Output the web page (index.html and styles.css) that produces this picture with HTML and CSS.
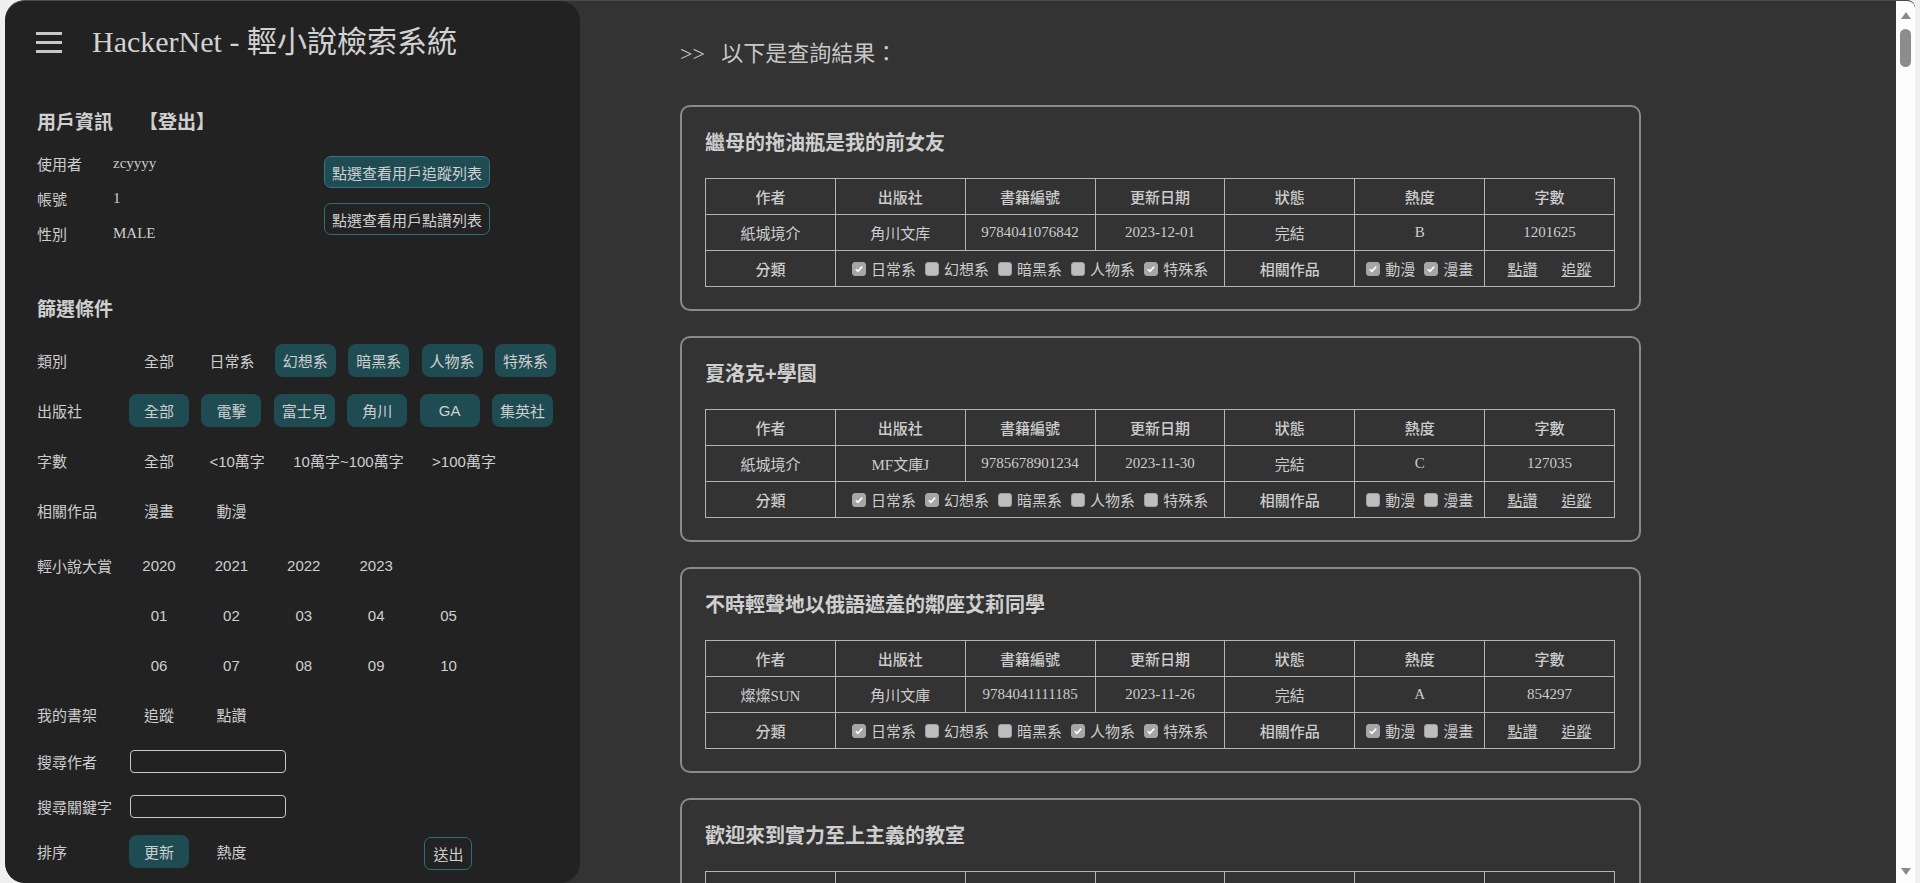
FILE: index.html
```html
<!DOCTYPE html>
<html lang="zh-Hant">
<head>
<meta charset="utf-8">
<title>HackerNet - 輕小說檢索系統</title>
<link rel="stylesheet" href="styles.css">
</head>
<body>
<div class="page">
  <aside class="sidebar">
    <div class="brand">
      <svg class="burger" width="26" height="21" viewBox="0 0 26 21"><rect x="0" y="0" width="26" height="3" fill="#c8c8c8"/><rect x="0" y="9" width="26" height="3" fill="#c8c8c8"/><rect x="0" y="18" width="26" height="3" fill="#c8c8c8"/></svg>
      <h1 class="brand-title">HackerNet - 輕小說檢索系統</h1>
    </div>

    <h2 class="sec-title">用戶資訊<span class="logout">【登出】</span></h2>
    <div class="user-body">
      <div class="info">
        <div class="info-row"><span class="info-label">使用者</span><span class="info-val">zcyyyy</span></div>
        <div class="info-row"><span class="info-label">帳號</span><span class="info-val">1</span></div>
        <div class="info-row"><span class="info-label">性別</span><span class="info-val">MALE</span></div>
      </div>
      <div class="user-btns">
        <button class="btn btn-fill">點選查看用戶追蹤列表</button>
        <button class="btn">點選查看用戶點讚列表</button>
      </div>
    </div>

    <h2 class="sec-title filter-title">篩選條件</h2>
    <div class="rows">
      <div class="row">
        <span class="row-label">類別</span>
        <div class="opts"><button class="opt">全部</button><button class="opt">日常系</button><button class="opt on">幻想系</button><button class="opt on">暗黑系</button><button class="opt on">人物系</button><button class="opt on">特殊系</button></div>
      </div>
      <div class="row">
        <span class="row-label">出版社</span>
        <div class="opts"><button class="opt on">全部</button><button class="opt on">電擊</button><button class="opt on">富士見</button><button class="opt on">角川</button><button class="opt on">GA</button><button class="opt on">集英社</button></div>
      </div>
      <div class="row">
        <span class="row-label">字數</span>
        <div class="opts"><button class="opt">全部</button><button class="opt">&lt;10萬字</button><button class="opt">10萬字~100萬字</button><button class="opt">&gt;100萬字</button></div>
      </div>
      <div class="row">
        <span class="row-label">相關作品</span>
        <div class="opts"><button class="opt">漫畫</button><button class="opt">動漫</button></div>
      </div>
      <div class="row award">
        <span class="row-label">輕小說大賞</span>
        <div class="opts"><button class="opt">2020</button><button class="opt">2021</button><button class="opt">2022</button><button class="opt">2023</button></div>
      </div>
      <div class="row">
        <span class="row-label"></span>
        <div class="opts"><button class="opt">01</button><button class="opt">02</button><button class="opt">03</button><button class="opt">04</button><button class="opt">05</button></div>
      </div>
      <div class="row">
        <span class="row-label"></span>
        <div class="opts"><button class="opt">06</button><button class="opt">07</button><button class="opt">08</button><button class="opt">09</button><button class="opt">10</button></div>
      </div>
      <div class="row shelf">
        <span class="row-label">我的書架</span>
        <div class="opts"><button class="opt">追蹤</button><button class="opt">點讚</button></div>
      </div>
      <div class="row search">
        <span class="row-label">搜尋作者</span>
        <input class="field" type="text">
      </div>
      <div class="row search">
        <span class="row-label">搜尋關鍵字</span>
        <input class="field" type="text">
      </div>
      <div class="row search">
        <span class="row-label">排序</span>
        <div class="opts"><button class="opt on">更新</button><button class="opt">熱度</button></div>
        <button class="btn submit">送出</button>
      </div>
    </div>
  </aside>

  <main class="main">
    <h2 class="result-head">&gt;&gt;&nbsp;&nbsp; 以下是查詢結果：</h2>

    <section class="card">
      <h3 class="card-title">繼母的拖油瓶是我的前女友</h3>
      <table class="book">
        <tr><th>作者</th><th>出版社</th><th>書籍編號</th><th>更新日期</th><th>狀態</th><th>熱度</th><th>字數</th></tr>
        <tr><td>紙城境介</td><td>角川文库</td><td>9784041076842</td><td>2023-12-01</td><td>完結</td><td>B</td><td>1201625</td></tr>
        <tr><th>分類</th>
          <td colspan="3"><span class="cb"><span class="box on"><svg viewBox="0 0 13 13"><path d="M3 6.8 5.3 9.1 10 3.9"/></svg></span>日常系</span><span class="cb"><span class="box"></span>幻想系</span><span class="cb"><span class="box"></span>暗黑系</span><span class="cb"><span class="box"></span>人物系</span><span class="cb"><span class="box on"><svg viewBox="0 0 13 13"><path d="M3 6.8 5.3 9.1 10 3.9"/></svg></span>特殊系</span></td>
          <th>相關作品</th>
          <td><span class="cb"><span class="box on"><svg viewBox="0 0 13 13"><path d="M3 6.8 5.3 9.1 10 3.9"/></svg></span>動漫</span><span class="cb"><span class="box on"><svg viewBox="0 0 13 13"><path d="M3 6.8 5.3 9.1 10 3.9"/></svg></span>漫畫</span></td>
          <td><a class="act" href="#">點讚</a><a class="act" href="#">追蹤</a></td></tr>
      </table>
    </section>

    <section class="card">
      <h3 class="card-title">夏洛克+學園</h3>
      <table class="book">
        <tr><th>作者</th><th>出版社</th><th>書籍編號</th><th>更新日期</th><th>狀態</th><th>熱度</th><th>字數</th></tr>
        <tr><td>紙城境介</td><td>MF文庫J</td><td>9785678901234</td><td>2023-11-30</td><td>完結</td><td>C</td><td>127035</td></tr>
        <tr><th>分類</th>
          <td colspan="3"><span class="cb"><span class="box on"><svg viewBox="0 0 13 13"><path d="M3 6.8 5.3 9.1 10 3.9"/></svg></span>日常系</span><span class="cb"><span class="box on"><svg viewBox="0 0 13 13"><path d="M3 6.8 5.3 9.1 10 3.9"/></svg></span>幻想系</span><span class="cb"><span class="box"></span>暗黑系</span><span class="cb"><span class="box"></span>人物系</span><span class="cb"><span class="box"></span>特殊系</span></td>
          <th>相關作品</th>
          <td><span class="cb"><span class="box"></span>動漫</span><span class="cb"><span class="box"></span>漫畫</span></td>
          <td><a class="act" href="#">點讚</a><a class="act" href="#">追蹤</a></td></tr>
      </table>
    </section>

    <section class="card">
      <h3 class="card-title">不時輕聲地以俄語遮羞的鄰座艾莉同學</h3>
      <table class="book">
        <tr><th>作者</th><th>出版社</th><th>書籍編號</th><th>更新日期</th><th>狀態</th><th>熱度</th><th>字數</th></tr>
        <tr><td>燦燦SUN</td><td>角川文庫</td><td>9784041111185</td><td>2023-11-26</td><td>完結</td><td>A</td><td>854297</td></tr>
        <tr><th>分類</th>
          <td colspan="3"><span class="cb"><span class="box on"><svg viewBox="0 0 13 13"><path d="M3 6.8 5.3 9.1 10 3.9"/></svg></span>日常系</span><span class="cb"><span class="box"></span>幻想系</span><span class="cb"><span class="box"></span>暗黑系</span><span class="cb"><span class="box on"><svg viewBox="0 0 13 13"><path d="M3 6.8 5.3 9.1 10 3.9"/></svg></span>人物系</span><span class="cb"><span class="box on"><svg viewBox="0 0 13 13"><path d="M3 6.8 5.3 9.1 10 3.9"/></svg></span>特殊系</span></td>
          <th>相關作品</th>
          <td><span class="cb"><span class="box on"><svg viewBox="0 0 13 13"><path d="M3 6.8 5.3 9.1 10 3.9"/></svg></span>動漫</span><span class="cb"><span class="box"></span>漫畫</span></td>
          <td><a class="act" href="#">點讚</a><a class="act" href="#">追蹤</a></td></tr>
      </table>
    </section>

    <section class="card">
      <h3 class="card-title">歡迎來到實力至上主義的教室</h3>
      <table class="book">
        <tr><th>作者</th><th>出版社</th><th>書籍編號</th><th>更新日期</th><th>狀態</th><th>熱度</th><th>字數</th></tr>
        <tr><td>衣笠彰梧</td><td>MF文庫J</td><td>9784040000000</td><td>2023-11-25</td><td>連載</td><td>A</td><td>1500000</td></tr>
      </table>
    </section>
  </main>

  <div class="scrollbar">
    <svg class="sb-arrow up" width="10" height="7" viewBox="0 0 10 7"><path d="M5 0 10 7 0 7Z" fill="#8a8a8a"/></svg>
    <div class="sb-thumb"></div>
    <div class="sb-track"></div>
    <svg class="sb-arrow down" width="10" height="7" viewBox="0 0 10 7"><path d="M0 0 10 0 5 7Z" fill="#8a8a8a"/></svg>
  </div>
</div>
</body>
</html>
```

FILE: styles.css
```css
* { box-sizing: border-box; }

html, body {
  margin: 0;
  height: 883px;
  overflow: hidden;
}

body {
  background: #efefef;
  padding: 0 5px;
  font-family: "Liberation Serif", "Noto Sans CJK TC", serif;
  color: #cdcdcd;
}

.page {
  display: flex;
  height: 883px;
  background: #333333;
  border-top: 1px solid #4a4a4a;
  border-radius: 20px 8px 0 20px;
  overflow: hidden;
}

/* ---------- sidebar ---------- */
.sidebar {
  width: 575px;
  flex-shrink: 0;
  background: #222222;
  border-radius: 20px;
  padding: 20px 0 0 32px;
}

.brand {
  display: flex;
  align-items: center;
  height: 42px;
}

.burger {
  margin-left: -1px;
  margin-right: 30px;
  flex-shrink: 0;
}

.brand-title {
  margin: 0;
  font-size: 30px;
  font-weight: normal;
  line-height: 42px;
  color: #d2d2d2;
  white-space: nowrap;
}

.sec-title {
  margin: 46px 0 0;
  font-family: "Noto Sans CJK TC", sans-serif;
  font-size: 19px;
  font-weight: bold;
  line-height: 24px;
  color: #cfcfcf;
}

.logout {
  margin-left: 26px;
}

.user-body {
  display: flex;
  margin-top: 13px;
}

.info {
  width: 287px;
}

.info-row {
  display: flex;
  align-items: center;
  height: 35px;
  font-size: 15px;
}

.info-label {
  width: 76px;
  flex-shrink: 0;
}

.user-btns {
  display: flex;
  flex-direction: column;
  align-items: flex-start;
  gap: 15px;
  padding-top: 10px;
}

.btn {
  height: 32px;
  padding: 0 7px;
  font-family: "Liberation Sans", "Noto Sans CJK TC", sans-serif;
  font-size: 15px;
  color: #cfcfcf;
  background: transparent;
  border: 1px solid #2c6f7a;
  border-radius: 7px;
}

.btn-fill {
  background: #1f4c53;
  border-color: #2f7782;
}

.filter-title {
  margin-top: 45px;
}

.rows {
  margin-top: 15px;
}

.row {
  display: flex;
  align-items: center;
  height: 50px;
  font-size: 15px;
}

.row.award { margin-top: 5px; }
.row.shelf { height: 49px; }
.row.search { height: 45px; }

.row-label {
  width: 92px;
  flex-shrink: 0;
}

.opts {
  display: flex;
  gap: 12.4px;
}

.opt {
  min-width: 60px;
  height: 33px;
  padding: 0 8px;
  border: none;
  border-radius: 8px;
  background: transparent;
  color: #cfcfcf;
  font-family: "Liberation Sans", "Noto Sans CJK TC", sans-serif;
  font-size: 15px;
  white-space: nowrap;
}

.opt.on {
  background: #1f4c53;
}

.field {
  width: 156px;
  height: 23px;
  margin-left: 1px;
  border: 1px solid #c8c8c8;
  border-radius: 4px;
  background: transparent;
  color: #cfcfcf;
}

.submit {
  height: 33px;
  padding: 0 8px;
  margin-left: 163px;
  margin-top: 3px;
}

/* ---------- main ---------- */
.main {
  flex: 1;
  min-width: 0;
  padding: 38px 0 0 100px;
}

.result-head {
  margin: 0 0 36px;
  font-size: 22px;
  font-weight: normal;
  line-height: 30px;
  color: #c8c8c8;
  white-space: nowrap;
}

.card {
  width: 961px;
  margin: 0 0 25px 0;
  padding: 26px 22px 22px 23px;
  border: 2px solid #8a8a8a;
  border-radius: 10px;
}

.card-title {
  margin: 0 0 25px;
  font-family: "Liberation Sans", "Noto Sans CJK TC", sans-serif;
  font-size: 20px;
  font-weight: bold;
  line-height: 20px;
  color: #cfcfcf;
  white-space: nowrap;
}

.book {
  width: 910px;
  table-layout: fixed;
  border-collapse: collapse;
}

.book tr { height: 36px; }

.book th,
.book td {
  border: 1px solid #b4b4b4;
  padding: 0;
  text-align: center;
  font-size: 15px;
  color: #cdcdcd;
  white-space: nowrap;
}

.book th { font-weight: 500; }
.book td { font-weight: normal; }

.cb {
  display: inline-flex;
  align-items: center;
  margin-right: 9px;
  vertical-align: middle;
}

.cb:last-child { margin-right: 0; }

.box {
  display: inline-block;
  width: 14px;
  height: 14px;
  margin-right: 5px;
  border: 1px solid #a0a0a0;
  border-radius: 3px;
  background: #bdbdbd;
}

.box.on {
  background: #a6a6a6;
  border-color: #a6a6a6;
}

.box svg {
  display: block;
  width: 12px;
  height: 12px;
}

.box svg path {
  fill: none;
  stroke: #ffffff;
  stroke-width: 1.8;
}

.act {
  margin: 0 12px;
  color: #cdcdcd;
  text-decoration: underline;
}

/* ---------- scrollbar ---------- */
.scrollbar {
  width: 19px;
  flex-shrink: 0;
  display: flex;
  flex-direction: column;
  align-items: center;
  background: #fdfdfd;
  border-top-right-radius: 6px;
}

.sb-arrow.up { margin-top: 11px; }

.sb-thumb {
  width: 11px;
  height: 38px;
  margin-top: 10px;
  border-radius: 6px;
  background: #8c8c8c;
}

.sb-track { flex: 1; }

.sb-arrow.down { margin-bottom: 8px; }
```
